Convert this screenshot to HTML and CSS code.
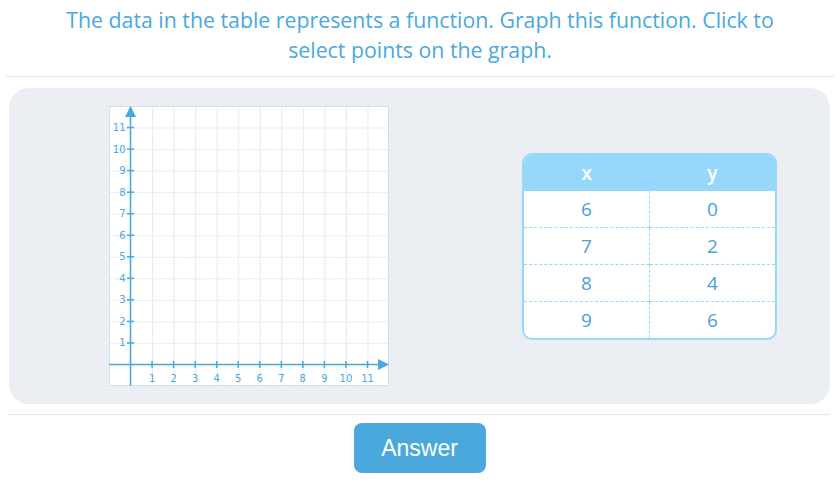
FILE: index.html
```html
<!DOCTYPE html>
<html lang="en">
<head>
    <meta charset="UTF-8">
    <title>Graph the function</title>
    <link rel="stylesheet" href="styles.css">
</head>
<body>
    <!-- Enunciado -->
    <div class="question">
        The data in the table represents a function. Graph this function. Click to<br>
        select points on the graph.
    </div>

    <div class="panel">
        <!-- Plano cartesiano 13x13 unidades, u = 280/13 -->
        <svg class="graph" width="280" height="280" viewBox="0 0 280 280">
            <defs>
                <pattern id="grid" x="0" y="0" width="21.538" height="21.538" patternUnits="userSpaceOnUse">
                    <line x1="0.5" y1="0" x2="0.5" y2="21.538" stroke="#e3eaf0" stroke-width="1"/>
                    <line x1="0" y1="0.5" x2="21.538" y2="0.5" stroke="#d3dde6" stroke-width="1" stroke-dasharray="1 1"/>
                </pattern>
            </defs>
            <rect x="0" y="0" width="280" height="280" fill="#fff"/>
            <rect x="0" y="0" width="280" height="280" fill="url(#grid)"/>
            <rect x="0.5" y="0.5" width="279" height="279" fill="none" stroke="#c9e2f3"/>

            <!-- ejes -->
            <g stroke="#4aa8e0" stroke-width="1.5">
                <line x1="21.5" y1="8" x2="21.5" y2="280"/>
                <line x1="0" y1="258.5" x2="272" y2="258.5"/>
                <!-- marcas eje y -->
                <line x1="18" y1="236.9" x2="25" y2="236.9"/>
                <line x1="18" y1="215.4" x2="25" y2="215.4"/>
                <line x1="18" y1="193.8" x2="25" y2="193.8"/>
                <line x1="18" y1="172.3" x2="25" y2="172.3"/>
                <line x1="18" y1="150.8" x2="25" y2="150.8"/>
                <line x1="18" y1="129.2" x2="25" y2="129.2"/>
                <line x1="18" y1="107.7" x2="25" y2="107.7"/>
                <line x1="18" y1="86.2" x2="25" y2="86.2"/>
                <line x1="18" y1="64.6" x2="25" y2="64.6"/>
                <line x1="18" y1="43.1" x2="25" y2="43.1"/>
                <line x1="18" y1="21.5" x2="25" y2="21.5"/>
                <!-- marcas eje x -->
                <line x1="43.1" y1="255" x2="43.1" y2="262"/>
                <line x1="64.6" y1="255" x2="64.6" y2="262"/>
                <line x1="86.2" y1="255" x2="86.2" y2="262"/>
                <line x1="107.7" y1="255" x2="107.7" y2="262"/>
                <line x1="129.2" y1="255" x2="129.2" y2="262"/>
                <line x1="150.8" y1="255" x2="150.8" y2="262"/>
                <line x1="172.3" y1="255" x2="172.3" y2="262"/>
                <line x1="193.8" y1="255" x2="193.8" y2="262"/>
                <line x1="215.4" y1="255" x2="215.4" y2="262"/>
                <line x1="236.9" y1="255" x2="236.9" y2="262"/>
                <line x1="258.5" y1="255" x2="258.5" y2="262"/>
            </g>
            <polygon points="21.5,0 16,11 27,11" fill="#4aa8e0"/>
            <polygon points="280,258.5 269,253 269,264" fill="#4aa8e0"/>

            <g class="ylabels" text-anchor="end">
                <text x="16.5" y="240.3">1</text>
                <text x="16.5" y="218.8">2</text>
                <text x="16.5" y="197.3">3</text>
                <text x="16.5" y="175.8">4</text>
                <text x="16.5" y="154.3">5</text>
                <text x="16.5" y="132.7">6</text>
                <text x="16.5" y="111.2">7</text>
                <text x="16.5" y="89.7">8</text>
                <text x="16.5" y="68.1">9</text>
                <text x="16.5" y="46.6">10</text>
                <text x="16.5" y="25">11</text>
            </g>
            <g class="xlabels" text-anchor="middle">
                <text x="43.1" y="276">1</text>
                <text x="64.6" y="276">2</text>
                <text x="86.2" y="276">3</text>
                <text x="107.7" y="276">4</text>
                <text x="129.2" y="276">5</text>
                <text x="150.8" y="276">6</text>
                <text x="172.3" y="276">7</text>
                <text x="193.8" y="276">8</text>
                <text x="215.4" y="276">9</text>
                <text x="236.9" y="276">10</text>
                <text x="258.5" y="276">11</text>
            </g>
        </svg>

        <!-- Tabla de valores -->
        <div class="table-box">
            <table class="values">
                <tr><th>x</th><th>y</th></tr>
                <tr><td>6</td><td>0</td></tr>
                <tr><td>7</td><td>2</td></tr>
                <tr><td>8</td><td>4</td></tr>
                <tr><td>9</td><td>6</td></tr>
            </table>
        </div>
    </div>

    <div class="footer">
        <button class="answer-button">Answer</button>
    </div>
</body>
</html>
```

FILE: styles.css
```css
body {
    margin: 0;
    background-color: #fff;
    font-family: 'Open Sans', 'Lato', sans-serif;
}
.question {
    margin: 0 6px;
    padding: 5px 0 11px;
    border-bottom: 1px solid #e1e5e9;
    color: #4aa8e0;
    font-size: 21.3px;
    line-height: 30px;
    text-align: center;
}
.panel {
    margin: 11px 10px 0 9px;
    height: 316px;
    box-sizing: border-box;
    padding-left: 100px;
    border-radius: 20px;
    background-color: #ebeff3;
    background-image: radial-gradient(circle, #e3e8ed 0.7px, transparent 1px);
    background-size: 5px 5px;
    display: flex;
    align-items: center;
}
.graph {
    display: block;
    flex: none;
}
.ylabels text,
.xlabels text {
    font-family: 'DejaVu Sans', sans-serif;
    font-size: 10px;
    fill: #4aa8e0;
}
.table-box {
    margin-left: 133px;
    width: 255px;
    box-sizing: border-box;
    border: 2px solid #96d8fb;
    border-radius: 10px;
    overflow: hidden;
    background-color: #fff;
}
.values {
    width: 100%;
    border-collapse: collapse;
    font-family: 'Open Sans', sans-serif;
    font-size: 19px;
}
.values th {
    height: 36px;
    padding: 0;
    background-color: #96d8fb;
    color: #fff;
    font-weight: 600;
}
.values td {
    width: 50%;
    height: 36px;
    padding: 0;
    text-align: center;
    color: #4a9fd8;
    border-top: 1px dashed #96d8fb;
}
.values td + td {
    border-left: 1px dashed #96d8fb;
}
.values tr:nth-child(2) td {
    border-top: none;
}
.footer {
    margin: 10px 10px 0 9px;
    border-top: 1px solid #e1e5e9;
    padding-top: 8px;
    text-align: center;
}
.answer-button {
    width: 132px;
    height: 50px;
    border: none;
    border-radius: 8px;
    background-color: #4ba8dc;
    color: #fff;
    font-family: 'Liberation Sans', sans-serif;
    font-size: 23px;
    cursor: pointer;
}
```
